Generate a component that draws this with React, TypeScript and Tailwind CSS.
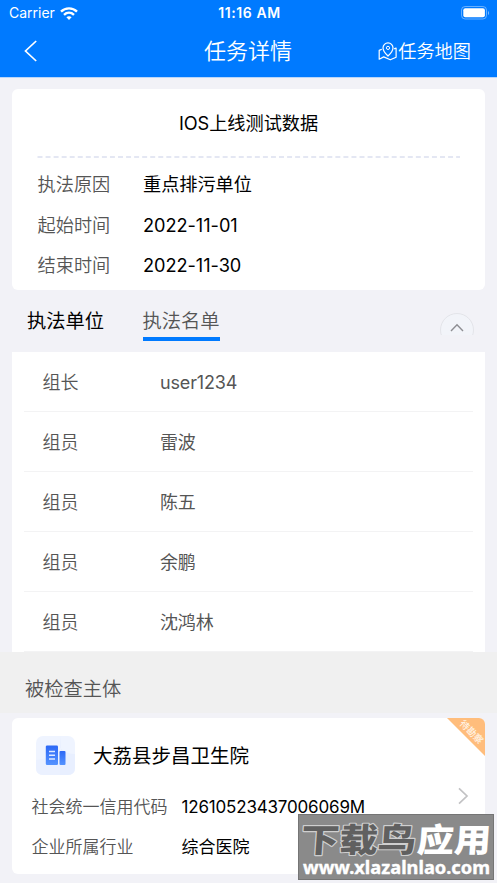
import React from "react";

const details = [
  { label: "执法原因", value: "重点排污单位" },
  { label: "起始时间", value: "2022-11-01" },
  { label: "结束时间", value: "2022-11-30" },
];

const members = [
  { role: "组长", name: "user1234" },
  { role: "组员", name: "雷波" },
  { role: "组员", name: "陈五" },
  { role: "组员", name: "余鹏" },
  { role: "组员", name: "沈鸿林" },
];

const StatusBar = () => (
  <div className="grid h-[26px] grid-cols-3 items-center pl-[9px] pr-[7px] leading-none">
    <div className="flex items-center gap-[5px]">
      <span className="text-[14px]">Carrier</span>
      <svg width="18" height="13" viewBox="0 0 18 13" fill="none" stroke="white" strokeWidth="2.4">
        <path d="M1 4.6C5.4.3 12.6.3 17 4.6" />
        <path d="M4 7.8c2.9-2.7 7.1-2.7 10 0" />
        <path d="M6.4 10.2c1.5-1.4 3.7-1.4 5.2 0L9 12.9z" fill="white" stroke="none" />
      </svg>
    </div>
    <span className="text-center text-[14px] font-semibold tracking-[0.6px]">11:16 AM</span>
    <svg className="justify-self-end" width="29" height="14" viewBox="0 0 29 14" fill="none">
      <rect x="0.5" y="0.5" width="25" height="12.5" rx="3.6" stroke="white" strokeOpacity="0.4" />
      <rect x="2.3" y="2.3" width="21.6" height="9" rx="2" fill="white" />
      <path d="M27 5v4c1.4-.6 1.4-3.4 0-4z" fill="white" fillOpacity="0.5" />
    </svg>
  </div>
);

const Header = () => (
  <header className="h-[78px] border-b border-[#b9d6fa] bg-[#007aff] text-white">
    <StatusBar />
    <div className="grid h-[50px] grid-cols-3 items-center pl-[24px] pr-[26px]">
      <svg width="14" height="22" viewBox="0 0 14 22" fill="none" stroke="white" strokeWidth="1.7">
        <path d="M12.2 1 1.5 11l10.7 10" />
      </svg>
      <h1 className="pl-px text-center text-[22px] font-[350] leading-none">任务详情</h1>
      <div className="flex items-center justify-end">
        <svg className="-mb-px" width="20" height="20" viewBox="0 0 20 20" fill="none" stroke="white" strokeWidth="1.2" strokeLinejoin="round">
          <path d="M10 14C7 11.1 5 8.7 5 5.9a5 5 0 0 1 10 0c0 2.8-2 5.2-5 8.1z" />
          <circle cx="10" cy="5.9" r="1.6" strokeWidth="1" />
          <path d="M3.8 7.2 1.2 8.4v8.8l4.5-2.3 6.6 2.9 5.8-2.6V6l-2 .9" />
        </svg>
        <span className="text-[18.2px] font-[350] leading-none">任务地图</span>
      </div>
    </div>
  </header>
);

const TaskCard = () => (
  <section className="mx-3 mt-[11px] h-[201px] rounded-[6px] bg-white px-[25px]">
    <h2 className="flex h-[67px] items-center justify-center pt-px text-[18.2px] leading-none tracking-[-0.05px]">
      IOS上线测试数据
    </h2>
    <svg className="block w-full" height="2">
      <line x1="0.5" y1="1" x2="424" y2="1" stroke="#dce0ef" strokeWidth="1.6" strokeDasharray="5 3.05" />
    </svg>
    <dl className="pt-[6px] text-[18.2px] leading-none">
      {details.map((d) => (
        <div key={d.label} className="flex h-[40.6px] items-center">
          <dt className="w-[106px] pl-[0.5px] font-[350] text-[#555]">{d.label}</dt>
          <dd className="tracking-[-0.05px]">{d.value}</dd>
        </div>
      ))}
    </dl>
  </section>
);

const Tabs = () => (
  <div className="flex h-[62px] items-start pl-[27px] pr-[23px] text-[19.3px] leading-none">
    <button className="mt-[22px] w-[115.5px] text-left">执法单位</button>
    <button className="mt-[22px] h-[29px] border-b-4 border-[#007aff] pb-[5px] font-[350] text-[#555]">执法名单</button>
    <div className="ml-auto mt-[23px] h-[22px] w-[34px] overflow-hidden">
      <div className="flex size-[34px] justify-center rounded-full border border-[#e3e4e9] bg-[#f2f4f9]">
        <svg className="mt-[9px]" width="14" height="9" viewBox="0 0 14 9" fill="none" stroke="#8e8e93" strokeWidth="1.4">
          <path d="M1 8 7 1.7 13 8" />
        </svg>
      </div>
    </div>
  </div>
);

const MemberList = () => (
  <ul className="mx-3 bg-white px-3 text-[18px] leading-none text-[#555]">
    {members.map((m) => (
      <li key={m.name} className="flex h-[60px] items-center border-b border-[#f3f3f4] pl-[18.5px] pt-[3px]">
        <span className="w-[117.5px] font-[350]">{m.role}</span>
        <span className="font-[380] tracking-[-0.15px]">{m.name}</span>
      </li>
    ))}
  </ul>
);

const CompanyIcon = () => (
  <svg width="39" height="39" viewBox="0 0 39 39">
    <defs>
      <linearGradient id="tower" x1="0" y1="0" x2="0" y2="1">
        <stop offset="0" stopColor="#2c68f6" />
        <stop offset="1" stopColor="#5593ff" />
      </linearGradient>
    </defs>
    <rect width="39" height="39" rx="7" fill="#eff4ff" />
    <path d="M24 0q2 13-1 39h9q7 0 7-7V18q-8 0-15-6z" fill="#e8efff" />
    <path d="M0 24q12 0 24-12v27H7q-7 0-7-7z" fill="#ebf1ff" />
    <rect x="9.8" y="9.5" width="12.2" height="19.5" rx="1.3" fill="url(#tower)" />
    <rect x="23.5" y="15" width="6" height="14" rx="1" fill="url(#tower)" />
    <path d="M13 15.5h6M13 19.2h6M13 23h6" stroke="#dfeaff" strokeWidth="1.4" />
  </svg>
);

const CompanyCard = () => (
  <section className="relative mx-3 mt-[5.4px] h-[156px] rounded-[6px] bg-white pt-[18px] leading-none">
    <div className="flex items-center gap-[18px] pl-6">
      <CompanyIcon />
      <h3 className="pt-[2px] text-[19.5px]">大荔县步昌卫生院</h3>
    </div>
    <div className="flex items-start pl-[19.5px] pr-[16px] pt-3">
      <dl className="flex-1 text-[17px]">
        <div className="flex h-10 items-center">
          <dt className="w-[150px] font-[350] text-[#555]">社会统一信用代码</dt>
          <dd className="tracking-[-0.18px]">12610523437006069M</dd>
        </div>
        <div className="flex h-10 items-center">
          <dt className="w-[150px] font-[350] text-[#555]">企业所属行业</dt>
          <dd>综合医院</dd>
        </div>
      </dl>
      <svg width="12" height="18" viewBox="0 0 12 18" fill="none" stroke="#c2c2c4" strokeWidth="1.7">
        <path d="m2 1.3 8 7.7-8 7.7" />
      </svg>
    </div>
    {/* corner ribbon */}
    <div className="absolute right-0 top-0 size-[38px] overflow-hidden rounded-tr-[6px]">
      <svg width="38" height="38" viewBox="0 0 38 38">
        <path d="M0 0h38v38z" fill="#ffbd7c" />
        <text x="24.5" y="17.3" transform="rotate(45 24.5 14)" textAnchor="middle" fontSize="9.5" fontWeight="500" fill="#fff3e4">待勘察</text>
      </svg>
    </div>
  </section>
);

const Watermark = () => (
  <div className="absolute left-[298px] top-[814px] h-[66px] w-[196px] border border-[#757575] bg-[#848484]/95">
    <svg className="-ml-px -mt-px overflow-visible" width="196" height="66" viewBox="0 0 196 66" fontWeight="900" strokeLinejoin="round" paintOrder="stroke">
      <g transform="skewX(-4)">
        <text x="5" y="38" fontSize="33" textLength="115" lengthAdjust="spacingAndGlyphs" fill="#606060" stroke="#cfcfcf" strokeWidth="2.2">下载鸟</text>
        <text x="121" y="38" fontSize="33" textLength="74" lengthAdjust="spacingAndGlyphs" fill="#fff">应用</text>
      </g>
      <text x="5" y="59.5" className="font-['Noto_Sans',sans-serif]" fontSize="18" fontWeight="700" textLength="187" lengthAdjust="spacingAndGlyphs" fill="#fff" stroke="#fff" strokeWidth="0.4">www.xlazalnlao.com</text>
    </svg>
  </div>
);

const App: React.FC = () => (
  <div className="relative h-[883px] overflow-hidden bg-[#f2f2f7] font-['Inter','Noto_Sans_CJK_SC',sans-serif] text-black">
    <Header />
    <TaskCard />
    <Tabs />
    <MemberList />
    <h2 className="flex h-[61px] items-center bg-[#f0f0f0] pl-[25px] pt-[14px] text-[19.3px] font-[350] leading-none text-[#555]">
      被检查主体
    </h2>
    <CompanyCard />
    <Watermark />
  </div>
);

export default App;
